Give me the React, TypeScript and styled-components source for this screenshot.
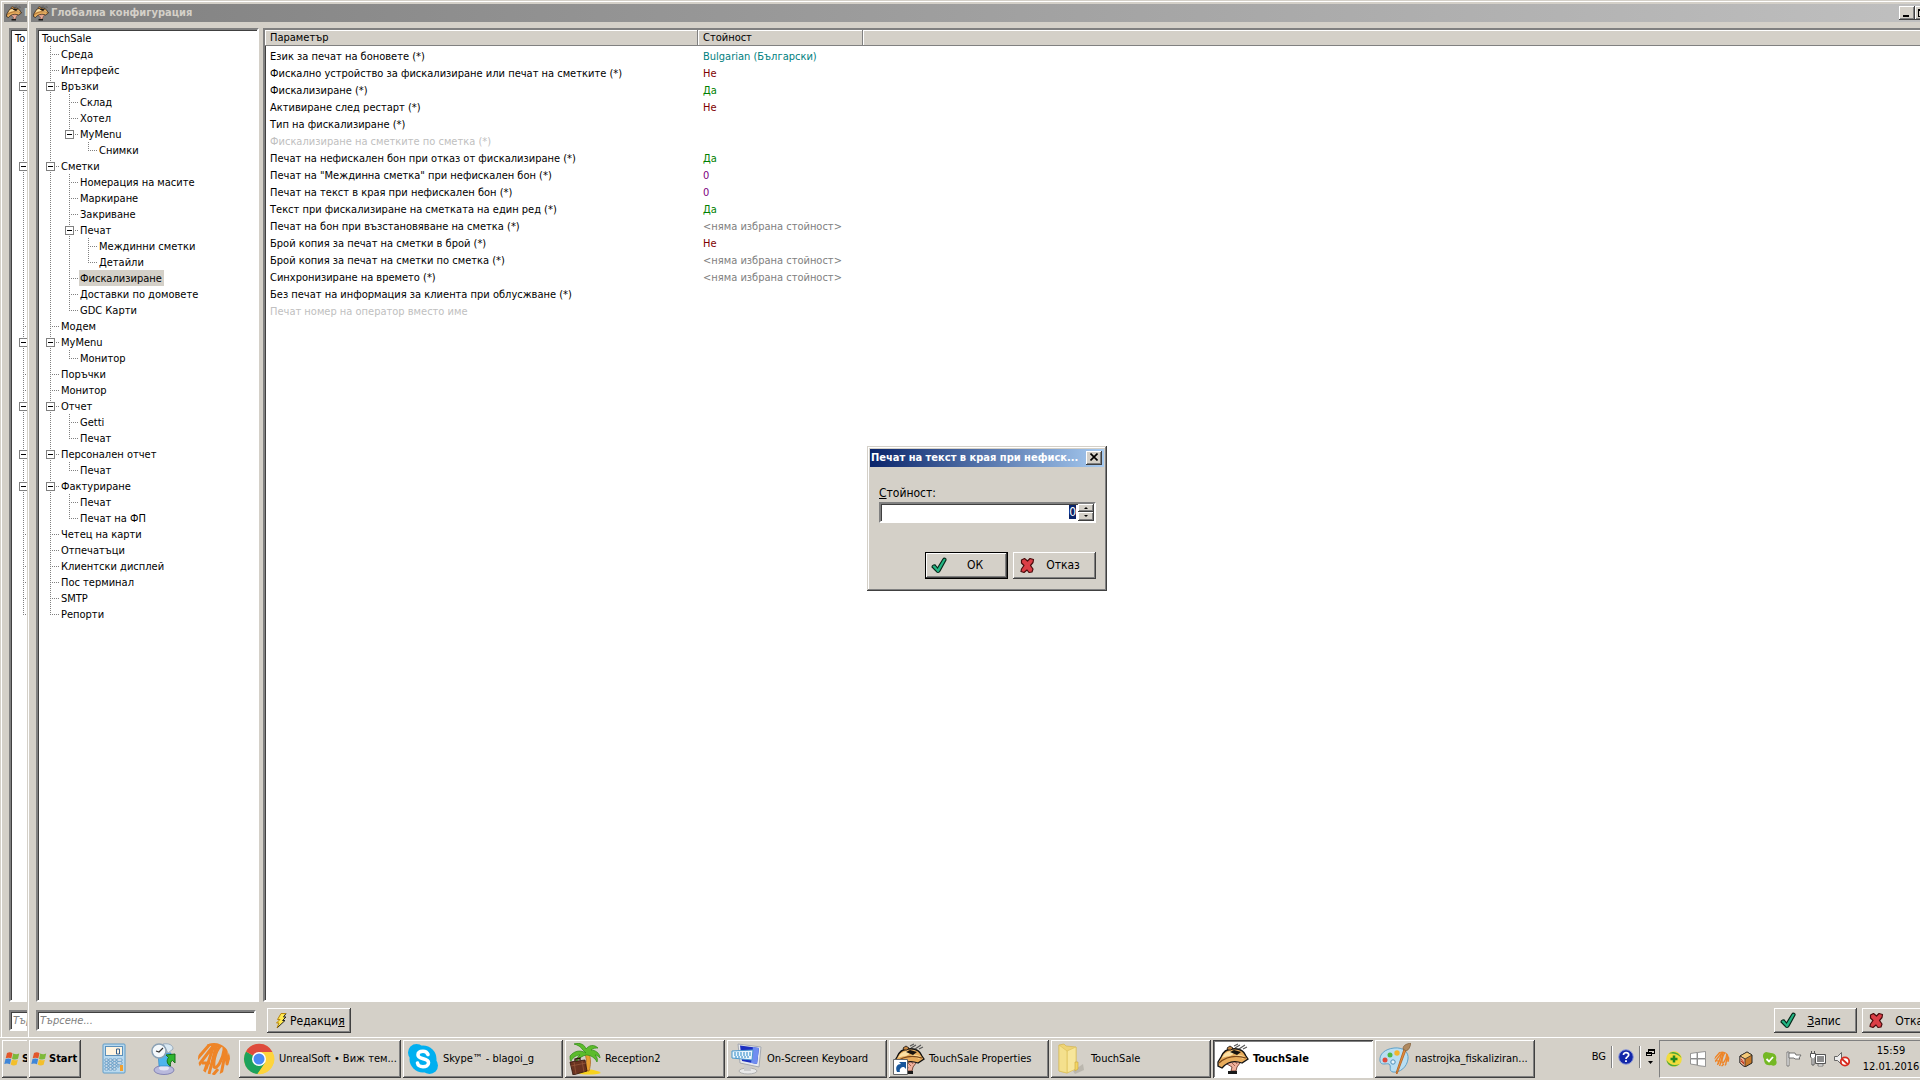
import React, { useEffect, useRef } from "react";
import styled, { createGlobalStyle, css } from "styled-components";

const face = "#d4d0c8";
const raised = css`
  box-shadow: inset -1px -1px #404040, inset 1px 1px #fff, inset -2px -2px #808080;
`;
const sunken = css`
  border: 2px solid;
  border-color: #808080 #fff #fff #808080;
  box-shadow: inset 1px 1px #404040;
`;

const GlobalStyle = createGlobalStyle`
  * { box-sizing: border-box; }
  body {
    margin: 0;
    overflow: hidden;
    background: ${face};
    color: #000;
    font: 11px/16px "DejaVu Sans Condensed", "DejaVu Sans", "Noto Sans", sans-serif;
  }
  button, input { font: inherit; color: inherit; margin: 0; border-radius: 0; }
  svg { display: block; flex: none; }
`;

const Page = styled.div`
  display: flex;
  height: 100vh;
  overflow: hidden;
  white-space: nowrap;
`;
const BackSlice = styled.div`
  flex: 0 0 27px;
  display: flex;
  overflow: hidden;
`;
const FrontSlice = styled.main`
  flex: 1;
  min-width: 0;
  display: flex;
  overflow: hidden;
`;
const Screen = styled.div`
  position: relative;
  flex: 0 0 100vw;
  display: flex;
  flex-direction: column;
`;
const Window = styled.section`
  flex: 1;
  min-height: 0;
  display: flex;
  flex-direction: column;
  margin: 1px 0 0 1px;
  padding: 3px 0 0 3px;
  background: ${face};
  box-shadow: inset 1px 1px #fff;
`;
const TitleBar = styled.header`
  flex: none;
  display: flex;
  align-items: center;
  gap: 2px;
  height: 18px;
  margin-right: -2px;
  padding-left: 2px;
  background: linear-gradient(90deg, #808080, #c0c0c0);
  color: ${face};
`;
const Title = styled.h1`
  flex: 1;
  margin: 0;
  font-size: 11px;
  line-height: 18px;
  font-weight: bold;
  overflow: hidden;
`;
const CaptionButtons = styled.div`
  display: flex;
  button:last-child { margin-left: 2px; }
`;
const CaptionButton = styled.button`
  display: grid;
  place-items: center;
  width: 16px;
  height: 14px;
  padding: 0 1px 1px 0;
  border: 0;
  background: ${face};
  color: #000;
  ${raised}
`;
const Panels = styled.div`
  flex: 1;
  min-height: 0;
  display: flex;
  gap: 4px;
  padding: 6px 0 0 5px;
`;
const TreePanel = styled.nav`
  flex: 0 0 223px;
  padding: 0 3px;
  overflow: hidden;
  background: #fff;
  ${sunken}
`;
const TreeList = styled.ul`
  margin: 0;
  padding: 0;
  list-style: none;
`;
const TreeRow = styled.div`
  display: flex;
  height: 16px;
`;
const TreeLabel = styled.span<{ $selected?: boolean }>`
  padding: 0 2px 0 1px;
  line-height: 18px;
  background: ${(p) => (p.$selected ? face : "transparent")};
`;
type GuideKind = "line" | "tee" | "end" | "blank";
const dotsDown = "repeating-linear-gradient(180deg, #808080 0 1px, transparent 1px 2px)";
const dotsAcross = "repeating-linear-gradient(90deg, #808080 0 1px, transparent 1px 2px)";
const Guide = styled.span<{ $kind: GuideKind }>`
  flex: 0 0 19px;
  padding: 4px 5px;
  background-repeat: no-repeat;
  ${(p) => p.$kind === "line" && css`
    background-image: ${dotsDown};
    background-size: 1px 16px;
    background-position: 9px 0;
  `}
  ${(p) => (p.$kind === "tee" || p.$kind === "end") && css`
    background-image: ${dotsDown}, ${dotsAcross};
    background-size: 1px ${p.$kind === "tee" ? 16 : 8}px, 10px 1px;
    background-position: 9px 0, 9px 8px;
  `}
`;
const Expander = styled.button`
  display: block;
  width: 9px;
  height: 9px;
  padding: 0;
  border: 1px solid #808080;
  background: linear-gradient(#000, #000) center / 5px 1px no-repeat #fff;
`;

const GridPanel = styled.div`
  flex: 1;
  background: #fff;
  ${sunken}
`;
const ParamTable = styled.table`
  width: 100%;
  table-layout: fixed;
  border-collapse: separate;
  border-spacing: 0;
  th {
    height: 16px;
    padding: 1px 5px 0;
    line-height: 14px;
    font-weight: normal;
    text-align: left;
    background: ${face};
    border-bottom: 1px solid #808080;
    box-shadow: inset -1px 0 #808080, inset 1px 1px #fff;
  }
  th:first-child { width: 433px; }
  th:nth-child(2) { width: 165px; }
  tbody::before { content: ""; display: block; height: 2px; }
`;
const tones = {
  text: "#000",
  off: "#c0c0c0",
  lang: "#008080",
  no: "#800000",
  yes: "#008000",
  num: "#800080",
  none: "#808080",
};
type Tone = keyof typeof tones;
const Cell = styled.td<{ $tone?: Tone }>`
  height: 17px;
  padding: 0 5px;
  line-height: 17px;
  color: ${(p) => tones[p.$tone ?? "text"]};
`;

const ActionBar = styled.div`
  flex: none;
  display: flex;
  align-items: flex-start;
  gap: 5px;
  height: 35px;
  padding: 6px 2px 0 5px;
`;
const Search = styled.input`
  flex: 0 0 220px;
  height: 21px;
  margin: 2px 6px 0 0;
  padding: 0 2px;
  outline: 0;
  background: #fff;
  ${sunken}
  &::placeholder { color: #808080; font-style: italic; opacity: 1; }
`;
const Spacer = styled.span`
  flex: 1;
`;
const ActionButton = styled.button<{ $default?: boolean }>`
  flex: 0 0 83px;
  display: flex;
  align-items: center;
  height: ${(p) => (p.$default !== undefined ? 27 : 25)}px;
  padding: 0 6px;
  border: 0;
  font-size: 12px;
  background: ${face};
  ${raised}
  ${(p) => p.$default && css`
    border: 1px solid #000;
    padding: 0 5px;
  `}
  span { flex: 1; text-align: center; }
`;

const Dialog = styled.form`
  width: 240px;
  padding: 3px;
  background: ${face};
  box-shadow: inset -1px -1px #404040, inset 1px 1px ${face}, inset -2px -2px #808080, inset 2px 2px #fff;
`;
const DialogLayer = styled.div`
  position: absolute;
  inset: 0 0 44px;
  display: grid;
  place-items: center;
`;
const DialogTitle = styled.header`
  display: flex;
  align-items: center;
  gap: 4px;
  height: 18px;
  padding: 0 2px 0 1px;
  color: #fff;
  background: linear-gradient(90deg, #0a246a, #a6caf0);
  h2 { flex: 1; min-width: 0; margin: 0; font-size: 11px; line-height: 18px; overflow: hidden; }
`;
const DialogBody = styled.div`
  padding: 18px 8px 9px 9px;
  label { display: block; font-size: 12px; line-height: 16px; }
`;
const SpinBox = styled.div`
  display: flex;
  height: 21px;
  margin: 1px 0 29px;
  background: #fff;
  ${sunken}
  input {
    flex: 1;
    min-width: 0;
    padding: 1px 2px;
    border: 0;
    outline: 0;
    background: none;
    font-size: 12px;
    line-height: 14px;
    text-align: right;
  }
  input::selection { background: #0a246a; color: #fff; }
`;
const SpinButtons = styled.div`
  display: grid;
  grid-template-rows: 1fr 1fr;
  width: 16px;
  button {
    display: grid;
    place-items: center;
    padding: 0;
    border: 0;
    background: ${face};
    ${raised}
  }
`;
const DialogButtons = styled.div`
  display: flex;
  justify-content: flex-end;
  gap: 5px;
`;

const Taskbar = styled.footer`
  flex: none;
  display: flex;
  height: 43px;
  padding: 3px 0 2px 2px;
  background: ${face};
  box-shadow: inset 0 1px #fff;
`;
const StartButton = styled.button`
  flex: 0 0 52px;
  display: flex;
  align-items: center;
  gap: 2px;
  padding: 0 2px;
  border: 0;
  background: ${face};
  font-weight: bold;
  ${raised}
`;
const QuickLaunch = styled.div`
  display: flex;
  align-items: center;
  gap: 16px;
  padding: 0 8px 0 16px;
`;
const QuickButton = styled.button`
  padding: 0;
  border: 0;
  background: none;
`;
const Tasks = styled.div`
  flex: 1;
  display: flex;
  gap: 2px;
`;
const TaskButton = styled.button<{ $active?: boolean }>`
  flex: 0 0 160px;
  display: flex;
  align-items: center;
  gap: 4px;
  padding: 0 4px;
  border: 0;
  background: ${face};
  ${raised}
  ${(p) => p.$active && css`
    background: #fff;
    font-weight: bold;
    box-shadow: inset 1px 1px #404040, inset -1px -1px #fff, inset 2px 2px #808080;
  `}
`;
const LanguageBar = styled.div`
  display: flex;
  align-items: center;
  gap: 5px;
  padding: 0 4px 4px 0;
`;
const Divider = styled.span`
  width: 2px;
  height: 22px;
  border-left: 1px solid #808080;
  border-right: 1px solid #fff;
`;
const Tray = styled.div`
  flex: 0 0 288px;
  display: flex;
  align-items: center;
  gap: 8px;
  padding-left: 6px;
  border: 1px solid;
  border-color: #808080 #fff #fff #808080;
`;
const Clock = styled.time`
  margin-left: 2px;
  width: 62px;
  text-align: center;
`;

/* ---------- icons ---------- */

const ServiceIcon = ({ size, shortcut }: { size: number; shortcut?: boolean }) => (
  <svg width={size} height={size} viewBox="0 0 32 32" aria-hidden="true">
    <path d="M13 17l-3 4 5 3-1 4h5l1-4 3-4 3-5z" fill="#f0b09c" stroke="#5a2a1a" strokeWidth=".8" />
    <path d="M15 20l3 3M18 18l2 3" stroke="#8a4a34" strokeWidth=".8" />
    <path d="M11 28h9v3h-9z" fill="#1a1a1a" />
    <path d="M1 19l3-5c2-5 6-8 11-8 7-1 12 2 14 7l2 3-6 4c-8-3-15-1-20 5l-4-2z" fill="#e8ac5c" stroke="#111" strokeWidth="1.300" />
    <path d="M5 15c2-5 6-7 10-7 3 2 1 4-2 5-3 0-6 1-8 2z" fill="#fbe0a4" />
    <path d="M18 12c4-1 8 0 10 2l-2 2c-3-2-6-2-9-2z" fill="#f9d48e" />
    <path d="M2 20c8-7 17-8 27-5" fill="none" stroke="#7c4718" strokeWidth="1.200" />
    <path d="M13 9l4-2 7 2-4 3z" fill="#17130f" />
    <path d="M10 5l3-2 3 2-2 2h-3z" fill="#c48440" stroke="#111" strokeWidth=".8" />
    <path d="M18 5l5-3M22 6l6-4M26 6l4-2M17 3l4-2" fill="none" stroke="#555" strokeWidth="1.100" />
    {shortcut && (
      <g>
        <path d="M.5 16.500h14v15H.5z" fill="#fff" stroke="#666" />
        <path d="M4 29c-2-5 0-8 4-8l-2-2h7v7l-2-2c-3 0-5 2-4 5z" fill="#17569b" />
      </g>
    )}
  </svg>
);
const FlagIcon = () => (
  <svg width="16" height="16" viewBox="0 0 16 16" aria-hidden="true">
    <path d="M3 2c2-1 4-1 5.500.2L7.300 7.500C5.500 6.500 3.500 6.500 1.700 7.300z" fill="#e2572b" />
    <path d="M9.200 2.600c2 1 4 1 6 0L14 7.800c-2 1-4 1-6-.1z" fill="#7db93a" />
    <path d="M1.500 8c2-.8 4-.8 5.600.3L6 13.300C4.200 12.300 2 12.300.3 13z" fill="#3f86d8" />
    <path d="M7.900 8.600c2 1 4 1 6 .1l-1.300 5c-2 1-4 1-5.900-.2z" fill="#f3bf2b" />
  </svg>
);
const CheckIcon = () => (
  <svg width="17" height="17" viewBox="0 0 17 17" aria-hidden="true">
    <path d="M1 10c0-2 3-3 4-1l1.500 2L12 2c1-1.500 3.500-.5 3 1L9 14c-1 2-3 2-4 0z" fill="#22b583" stroke="#06291a" strokeWidth="1.200" />
  </svg>
);
const CrossIcon = () => (
  <svg width="17" height="17" viewBox="0 0 17 17" aria-hidden="true">
    <path d="M2.500 3L5.500 1.500 8.500 4 11 1.500 14.500 2.500 14 5.500 11.500 8.500 14 12 13 15 10 15.500 8 13 5 15.500 2 14.500 2.500 12 5 8.500 2.500 6z" fill="#dc3e46" stroke="#4a0c0c" strokeWidth="1.200" strokeLinejoin="round" />
  </svg>
);
const BoltIcon = () => (
  <svg width="17" height="17" viewBox="0 0 17 17" aria-hidden="true">
    <path d="M8 1.500h5L10.500 5H13L9.500 8.500H12L4 16l2-5H3.500L7 7.500H4.500z" fill="#ffe94e" />
    <path d="M13 1.500L10.500 5H13L9.500 8.500H12L4 16" stroke="#222" fill="none" />
    <path d="M4 16l2-5H3.500L7 7.500H4.500L8 1.500h5" stroke="#b8860b" fill="none" />
  </svg>
);
const CalculatorIcon = () => (
  <svg width="34" height="32" viewBox="0 0 34 32" aria-hidden="true">
    <rect x="6" y="1" width="22" height="29" rx="1" fill="#b9d9ee" stroke="#5f9cc8" />
    <rect x="8.500" y="3.500" width="17" height="9" fill="#fff4e0" stroke="#5b90bb" />
    <path d="M19.500 6h3v5h-3z" fill="none" stroke="#345f8c" />
    <path d="M8 16h3v2H8zM12 16h3v2h-3zM16 16h3v2h-3zM20 16h5v2h-5zM8 19h3v2H8zM12 19h3v2h-3zM16 19h3v2h-3zM20 19h5v2h-5zM8 22h3v2H8zM12 22h3v2h-3zM16 22h3v2h-3zM20 22h2v2h-2zM8 25h3v2H8zM12 25h3v2h-3zM16 25h3v2h-3z" fill="#fff" stroke="#4d86b5" strokeWidth=".7" />
    <path d="M23 22h3v6h-3z" fill="#f0a030" />
  </svg>
);
const ClockSyncIcon = () => (
  <svg width="34" height="32" viewBox="0 0 34 32" aria-hidden="true">
    <ellipse cx="17" cy="27" rx="10" ry="4.500" fill="#b9b9dc" stroke="#8484b4" />
    <ellipse cx="17" cy="25" rx="5" ry="2.500" fill="#e4e4f4" />
    <path d="M11 10h13l-1 13H12z" fill="#4fb4ec" stroke="#2a7fc4" strokeWidth=".6" />
    <path d="M16 1c6-1 10 1 10 5l-5 4z" fill="#d9e8f2" stroke="#9ab" />
    <circle cx="12" cy="8" r="7" fill="#f4f8fb" stroke="#8aa0b4" strokeWidth="1.500" />
    <path d="M16 5l-4 4-3-1" stroke="#333" fill="none" strokeWidth="1.200" />
    <path d="M19 12l9-1v9l-2.500-2.500c-2 1-2.500 3-2 5.500-4-2-4-6-2-8.500z" fill="#2fb52f" stroke="#187018" />
  </svg>
);
const AtonIcon = ({ size, id }: { size: number; id: string }) => (
  <svg width={size} height={size} viewBox="0 0 34 34" aria-hidden="true">
    <clipPath id={id}><circle cx="17" cy="17" r="16" /></clipPath>
    <g clipPath={`url(#${id})`} fill="none" stroke="#ee8528" strokeWidth="3" strokeLinejoin="round">
      <path d="M0 17L13 2M1 24L17 3l-8 24M7 31l3-9M5 21h8" />
      <path d="M10 3l12-2M20 1L12 32M15 5l8-2" />
      <path d="M25 3c-5 2-9 15-8 22 3 3 9-8 10-17 0-3 0-5-2-5z" />
      <path d="M24 33l5-26 1 15 5-17M16 33l5-6" />
    </g>
  </svg>
);
const ChromeIcon = () => (
  <svg width="32" height="32" viewBox="0 0 32 32" aria-hidden="true">
    <circle cx="16" cy="16" r="15" fill="#fdd43c" />
    <path d="M16 16L3 8.500A15 15 0 0 0 14.500 31L22.500 20z" fill="#1da25c" />
    <path d="M16 16L3 8.500A15 15 0 0 1 29.500 9H16z" fill="#de4b3e" />
    <path d="M16 9h13.500A15 15 0 0 1 14.500 31l8-12z" fill="#fdd43c" />
    <circle cx="16" cy="16" r="7" fill="#fff" />
    <circle cx="16" cy="16" r="5.500" fill="#4a8af4" />
  </svg>
);
const SkypeIcon = () => (
  <svg width="32" height="32" viewBox="0 0 32 32" aria-hidden="true">
    <circle cx="9.500" cy="9.500" r="8.500" fill="#00aff0" />
    <circle cx="22.500" cy="22.500" r="8.500" fill="#00aff0" />
    <circle cx="16" cy="16" r="13.500" fill="#00aff0" />
    <path d="M21 11.500C20 9 18.500 8.300 16 8.300c-3 0-5 1.300-5 3.700 0 5 10.500 2.500 10.500 7.700 0 2.600-2.500 4-5.500 4-3.200 0-5-1.200-5.500-3.700" fill="none" stroke="#fff" strokeWidth="3.600" strokeLinecap="round" />
  </svg>
);
const PalmIcon = () => (
  <svg width="32" height="32" viewBox="0 0 32 32" aria-hidden="true">
    <path d="M8 30c4-5 16-5 24 0-6 2-18 2-24 0z" fill="#f7d21c" />
    <path d="M16 11l4-1c2 6 2 12 0 18h-5c3-6 3-11 1-17z" fill="#e8a030" stroke="#a8641c" strokeWidth=".7" />
    <path d="M17 10C12 7 6 7 1 13c0 3 0 4 1 5 2-4 6-6 9-6-3 2-4 4-4 7 3-4 6-6 10-7 5 0 9 3 11 7 1-3 0-5-2-7 2 0 4 2 5 3 0-5-5-8-9-8 2-2 5-2 7-2-4-4-9-3-12 1-1-4-6-7-12-5 4 1 7 3 8 5z" fill="#5cbc2c" stroke="#2e8a12" strokeWidth=".7" />
    <path d="M1 19l15-2 2 11-14 4z" fill="#6a3320" stroke="#2f130a" strokeWidth=".8" />
    <path d="M6 18v-2l5-1v2" fill="none" stroke="#2f130a" strokeWidth="1.300" />
    <path d="M2 23l15-3M5 19l2 12M13 18l2 11" stroke="#94563a" fill="none" strokeWidth=".8" />
  </svg>
);
const KeyboardIcon = () => (
  <svg width="32" height="32" viewBox="0 0 32 32" aria-hidden="true">
    <ellipse cx="17" cy="28" rx="9" ry="3" fill="#e8e8e8" stroke="#b0b0b0" />
    <path d="M13 22h6l1 6h-7z" fill="#ccc" />
    <path d="M7 1l23 3-2 20L9 20z" fill="#e8eaee" stroke="#a4a8b0" />
    <path d="M9 2.500L28 5l-2 16-15-3z" fill="#1c2fc0" />
    <path d="M22 4l6 1-2 16-6-1z" fill="#6f8df0" />
    <path d="M1 8l21-1-1 10L1 15z" fill="#eaf6fd" stroke="#4a97cc" />
    <path d="M3 10h17M3 12h17M4 14h15" stroke="#2684c4" strokeDasharray="2 1" />
  </svg>
);
const FolderIcon = () => (
  <svg width="32" height="32" viewBox="0 0 32 32" aria-hidden="true">
    <path d="M18 28l10-7 1 6-9 4z" fill="#aaa69c" opacity=".6" />
    <path d="M4 2l5-1 2 2 10 1v21l-9 5-8-2z" fill="#eed375" stroke="#d4b54e" strokeWidth=".7" />
    <path d="M12 8l9-4v22l-9 4z" fill="#f7e69b" stroke="#dcc05a" strokeWidth=".7" />
    <path d="M4 2l8 6v22l-8-2z" fill="#f4e08d" stroke="#dcc05a" strokeWidth=".7" />
    <path d="M20 19h3v7l-3 2z" fill="#f3d562" stroke="#caa63c" strokeWidth=".6" />
  </svg>
);
const PaletteIcon = () => (
  <svg width="32" height="32" viewBox="0 0 32 32" aria-hidden="true">
    <path d="M15 5c9-1 15 4 14 11-1 8-8 14-15 13-5-1-1-6-4-8-3-1-8 2-9-3C0 11 6 6 15 5z" fill="#b9def2" stroke="#5fa0c8" />
    <circle cx="6" cy="17" r="2.500" fill="#e04a3c" />
    <circle cx="11" cy="12" r="2.500" fill="#4cb848" />
    <circle cx="18" cy="10" r="2.700" fill="#f3b52c" />
    <circle cx="14" cy="19" r="2.200" fill="#e8f4fa" stroke="#4d8fb8" />
    <path d="M25 6l2 1-9 24-1-1z" fill="#e88c3c" stroke="#b0601c" strokeWidth=".8" />
    <path d="M24 6c0-3 2-5 8-6-1 4-2 7-5 8z" fill="#b08a60" stroke="#80603c" strokeWidth=".7" />
  </svg>
);
const HelpIcon = () => (
  <svg width="16" height="16" viewBox="0 0 16 16" aria-hidden="true">
    <circle cx="8" cy="8" r="7.300" fill="#1226a8" stroke="#8c98d8" />
    <path d="M5.500 6c0-3.500 5.500-3 5.200 0C10.500 8 8 7.800 8 10M8 11.300v1.700" fill="none" stroke="#fff" strokeWidth="1.800" />
  </svg>
);
const RestoreIcon = () => (
  <svg width="9" height="16" viewBox="0 0 9 16" aria-hidden="true">
    <path d="M2 0h7v5H6V4h2V2H3v1H2z" />
    <path d="M0 3h6v4H0zM1 5v1h4V5z" fillRule="evenodd" />
    <path d="M2 12h5l-2.500 3z" />
  </svg>
);
const PlusBallIcon = () => (
  <svg width="16" height="16" viewBox="0 0 16 16" aria-hidden="true">
    <circle cx="8" cy="8" r="7.800" fill="#f2dc3c" />
    <path d="M3 2.500C7-.5 13 1 15.500 7 12 3 8 2 3 2.500z" fill="#4ca83c" />
    <path d="M.5 9c3 5 8 6 13 4-4 4-12 3-13-4z" fill="#4ca83c" />
    <path d="M8 4.500v7M4.500 8h7" stroke="#1f8a1f" strokeWidth="2.500" />
  </svg>
);
const WindowsIcon = () => (
  <svg width="16" height="16" viewBox="0 0 16 16" aria-hidden="true">
    <path d="M.5 2.500L7 1.500v6H.5zM7.500 1.500L15.500.5v7h-8zM.5 8H7v6L.5 13zM7.500 8h8v7.500l-8-1z" fill="#fff" stroke="#808080" strokeWidth=".8" />
  </svg>
);
const BoxIcon = () => (
  <svg width="16" height="16" viewBox="0 0 16 16" aria-hidden="true">
    <path d="M2 5l7-4 5 3v8l-7 4-5-4z" fill="#c87a28" stroke="#222" />
    <path d="M2 5l7-4 5 3-7 4z" fill="#f4c878" stroke="#222" strokeWidth=".7" />
    <path d="M7 8v8l-5-4V5z" fill="#f0b090" stroke="#222" strokeWidth=".7" />
    <path d="M3 8l3 4M3 10l3 3" stroke="#c03820" />
  </svg>
);
const SkypeTrayIcon = () => (
  <svg width="16" height="16" viewBox="0 0 16 16" aria-hidden="true">
    <path d="M4 1l5 1c5 0 6 4 5 7 2 4-1 7-5 5C4 15 2 12 2 8 0 5 1 2 4 1z" fill="#74b824" />
    <path d="M4.500 8l2.500 2.500L11 6" fill="none" stroke="#fff" strokeWidth="1.800" />
  </svg>
);
const FlagTrayIcon = () => (
  <svg width="16" height="16" viewBox="0 0 16 16" aria-hidden="true">
    <path d="M1 1h2v14H1z" fill="#fff" stroke="#666" strokeWidth=".8" />
    <path d="M3 2h6l1 2h5l-2 3 1 1H9L8 7H3z" fill="#fff" stroke="#666" strokeWidth=".9" />
  </svg>
);
const NetworkIcon = () => (
  <svg width="16" height="16" viewBox="0 0 16 16" aria-hidden="true">
    <path d="M5.500 3.500h10v9h-10z" fill="#8c8c8c" stroke="#555" />
    <path d="M6.500 4.500h8v7h-8z" fill="none" stroke="#fff" />
    <path d="M8 13h5v2H8z" fill="#fff" stroke="#555" strokeWidth=".7" />
    <path d="M.5 2.500h5V6l-1.500 1.500V14H2V7.500L.5 6zM1.500 0v2M4.500 0v2" fill="#fff" stroke="#555" />
  </svg>
);
const MutedIcon = () => (
  <svg width="16" height="16" viewBox="0 0 16 16" aria-hidden="true">
    <path d="M.5 5.500h3l4-4v12l-4-4h-3z" fill="#eee" stroke="#666" />
    <circle cx="11" cy="10.500" r="4.200" fill="#fff" stroke="#d8281c" strokeWidth="1.800" />
    <path d="M8 8l6 5.500" stroke="#d8281c" strokeWidth="1.800" />
  </svg>
);

/* ---------- tree ---------- */

type Node = { name: string; children?: Node[]; selected?: boolean };
const n = (name: string, children?: Node[]): Node => ({ name, children });

const tree: Node[] = [
  n("Среда"),
  n("Интерфейс"),
  n("Връзки", [n("Склад"), n("Хотел"), n("MyMenu", [n("Снимки")])]),
  n("Сметки", [
    n("Номерация на масите"),
    n("Маркиране"),
    n("Закриване"),
    n("Печат", [n("Междинни сметки"), n("Детайли")]),
    { name: "Фискализиране", selected: true },
    n("Доставки по домовете"),
    n("GDC Карти"),
  ]),
  n("Модем"),
  n("MyMenu", [n("Монитор")]),
  n("Поръчки"),
  n("Монитор"),
  n("Отчет", [n("Getti"), n("Печат")]),
  n("Персонален отчет", [n("Печат")]),
  n("Фактуриране", [n("Печат"), n("Печат на ФП")]),
  n("Четец на карти"),
  n("Отпечатъци"),
  n("Клиентски дисплей"),
  n("Пос терминал"),
  n("SMTP"),
  n("Репорти"),
];

function Branch({ nodes, guides = [], bare }: { nodes: Node[]; guides?: GuideKind[]; bare?: boolean }) {
  return (
    <TreeList>
      {nodes.map((node, i) => {
        const last = i === nodes.length - 1;
        return (
          <li key={node.name}>
            <TreeRow>
              {guides.map((g, k) => <Guide key={k} $kind={g} />)}
              <Guide $kind={last ? "end" : "tee"}>
                {node.children && <Expander type="button" aria-label={`Свий ${node.name}`} tabIndex={bare ? -1 : 0} />}
              </Guide>
              {!bare && <TreeLabel $selected={node.selected}>{node.name}</TreeLabel>}
            </TreeRow>
            {node.children && (
              <Branch nodes={node.children} guides={[...guides, last ? "blank" : "line"]} bare={bare} />
            )}
          </li>
        );
      })}
    </TreeList>
  );
}

/* ---------- table ---------- */

const none: [string, Tone] = ["<няма избрана стойност>", "none"];
const params: { name: string; value?: [string, Tone]; off?: boolean }[] = [
  { name: "Език за печат на боновете (*)", value: ["Bulgarian (Български)", "lang"] },
  { name: "Фискално устройство за фискализиране или печат на сметките (*)", value: ["Не", "no"] },
  { name: "Фискализиране (*)", value: ["Да", "yes"] },
  { name: "Активиране след рестарт (*)", value: ["Не", "no"] },
  { name: "Тип на фискализиране (*)" },
  { name: "Фискализиране на сметките по сметка (*)", off: true },
  { name: "Печат на нефискален бон при отказ от фискализиране (*)", value: ["Да", "yes"] },
  { name: 'Печат на "Междинна сметка" при нефискален бон (*)', value: ["0", "num"] },
  { name: "Печат на текст в края при нефискален бон (*)", value: ["0", "num"] },
  { name: "Текст при фискализиране на сметката на един ред (*)", value: ["Да", "yes"] },
  { name: "Печат на бон при възстановяване на сметка (*)", value: none },
  { name: "Брой копия за печат на сметки в брой (*)", value: ["Не", "no"] },
  { name: "Брой копия за печат на сметки по сметка (*)", value: none },
  { name: "Синхронизиране на времето (*)", value: none },
  { name: "Без печат на информация за клиента при облусжване (*)" },
  { name: "Печат номер на оператор вместо име", off: true },
];

const tasks = [
  { label: "UnrealSoft • Виж тем...", icon: <ChromeIcon /> },
  { label: "Skype™ - blagoi_g", icon: <SkypeIcon /> },
  { label: "Reception2", icon: <PalmIcon /> },
  { label: "On-Screen Keyboard", icon: <KeyboardIcon /> },
  { label: "TouchSale Properties", icon: <ServiceIcon size={32} shortcut /> },
  { label: "TouchSale", icon: <FolderIcon /> },
  { label: "TouchSale", icon: <ServiceIcon size={32} />, active: true },
  { label: "nastrojka_fiskaliziran...", icon: <PaletteIcon /> },
];

function ValueDialog() {
  const field = useRef<HTMLInputElement>(null);
  useEffect(() => {
    field.current?.focus();
    field.current?.select();
  }, []);
  return (
    <DialogLayer>
      <Dialog onSubmit={(e) => e.preventDefault()}>
        <DialogTitle>
          <h2>Печат на текст в края при нефиск...</h2>
          <CaptionButton type="button" aria-label="Затвори">
            <svg width="8" height="8" viewBox="0 0 8 8"><path d="M.5.5l7 7M7.500.5l-7 7" stroke="#000" strokeWidth="1.600" /></svg>
          </CaptionButton>
        </DialogTitle>
        <DialogBody>
          <label htmlFor="value"><u>С</u>тойност:</label>
          <SpinBox>
            <input id="value" ref={field} defaultValue="0" />
            <SpinButtons>
              <button type="button" aria-label="Увеличи"><svg width="4" height="2" viewBox="0 0 4 2"><path d="M0 2l2-2 2 2z" /></svg></button>
              <button type="button" aria-label="Намали"><svg width="4" height="2" viewBox="0 0 4 2"><path d="M0 0l2 2 2-2z" /></svg></button>
            </SpinButtons>
          </SpinBox>
          <DialogButtons>
            <ActionButton type="submit" $default><CheckIcon /><span>ОК</span></ActionButton>
            <ActionButton type="button" $default={false}><CrossIcon /><span>Отказ</span></ActionButton>
          </DialogButtons>
        </DialogBody>
      </Dialog>
    </DialogLayer>
  );
}

export default function App() {
  return (
    <Page>
      <GlobalStyle />
      <BackSlice aria-hidden="true">
        <Screen>
          <Window>
            <TitleBar><ServiceIcon size={16} /><Title as="span">Г</Title></TitleBar>
            <Panels>
              <TreePanel as="div">
                <TreeRow><TreeLabel>To</TreeLabel></TreeRow>
                <Branch nodes={tree} bare />
              </TreePanel>
            </Panels>
            <ActionBar><Search placeholder="Тър" tabIndex={-1} /></ActionBar>
          </Window>
          <Taskbar as="div"><StartButton type="button" tabIndex={-1}><FlagIcon />S</StartButton></Taskbar>
        </Screen>
      </BackSlice>
      <FrontSlice>
        <Screen>
          <Window>
            <TitleBar>
              <ServiceIcon size={16} />
              <Title>Глобална конфигурация</Title>
              <CaptionButtons>
                <CaptionButton type="button" aria-label="Минимизирай">
                  <svg width="8" height="8" viewBox="0 0 8 8"><path d="M0 6h6v2H0z" /></svg>
                </CaptionButton>
                <CaptionButton type="button" aria-label="Възстанови">
                  <svg width="9" height="9" viewBox="0 0 9 9"><path d="M0 1h8v8H0zM1 3v5h6V3z" fillRule="evenodd" /></svg>
                </CaptionButton>
                <CaptionButton type="button" aria-label="Затвори" />
              </CaptionButtons>
            </TitleBar>
            <Panels>
              <TreePanel>
                <TreeRow><TreeLabel>TouchSale</TreeLabel></TreeRow>
                <Branch nodes={tree} />
              </TreePanel>
              <GridPanel>
                <ParamTable>
                  <thead><tr><th>Параметър</th><th>Стойност</th><th /></tr></thead>
                  <tbody>
                    {params.map((p) => (
                      <tr key={p.name}>
                        <Cell $tone={p.off ? "off" : "text"}>{p.name}</Cell>
                        <Cell $tone={p.value?.[1]}>{p.value?.[0]}</Cell>
                        <Cell />
                      </tr>
                    ))}
                  </tbody>
                </ParamTable>
              </GridPanel>
            </Panels>
            <ActionBar>
              <Search placeholder="Търсене..." aria-label="Търсене" />
              <ActionButton type="button"><BoltIcon /><span>Редакци<u>я</u></span></ActionButton>
              <Spacer />
              <ActionButton type="button"><CheckIcon /><span><u>З</u>апис</span></ActionButton>
              <ActionButton type="button"><CrossIcon /><span>Отказ</span></ActionButton>
            </ActionBar>
          </Window>
          <Taskbar>
            <StartButton type="button"><FlagIcon />Start</StartButton>
            <QuickLaunch>
              <QuickButton type="button" aria-label="Calculator"><CalculatorIcon /></QuickButton>
              <QuickButton type="button" aria-label="Clock"><ClockSyncIcon /></QuickButton>
              <QuickButton type="button" aria-label="ATON"><AtonIcon size={34} id="aton-large" /></QuickButton>
            </QuickLaunch>
            <Tasks>
              {tasks.map((t, i) => (
                <TaskButton key={i} type="button" $active={t.active}>{t.icon}{t.label}</TaskButton>
              ))}
            </Tasks>
            <LanguageBar>
              <span>BG</span>
              <Divider />
              <HelpIcon />
              <Divider />
              <RestoreIcon />
            </LanguageBar>
            <Tray>
              <PlusBallIcon />
              <WindowsIcon />
              <AtonIcon size={16} id="aton-small" />
              <BoxIcon />
              <SkypeTrayIcon />
              <FlagTrayIcon />
              <NetworkIcon />
              <MutedIcon />
              <Clock>15:59<br />12.01.2016</Clock>
            </Tray>
          </Taskbar>
          <ValueDialog />
        </Screen>
      </FrontSlice>
    </Page>
  );
}
